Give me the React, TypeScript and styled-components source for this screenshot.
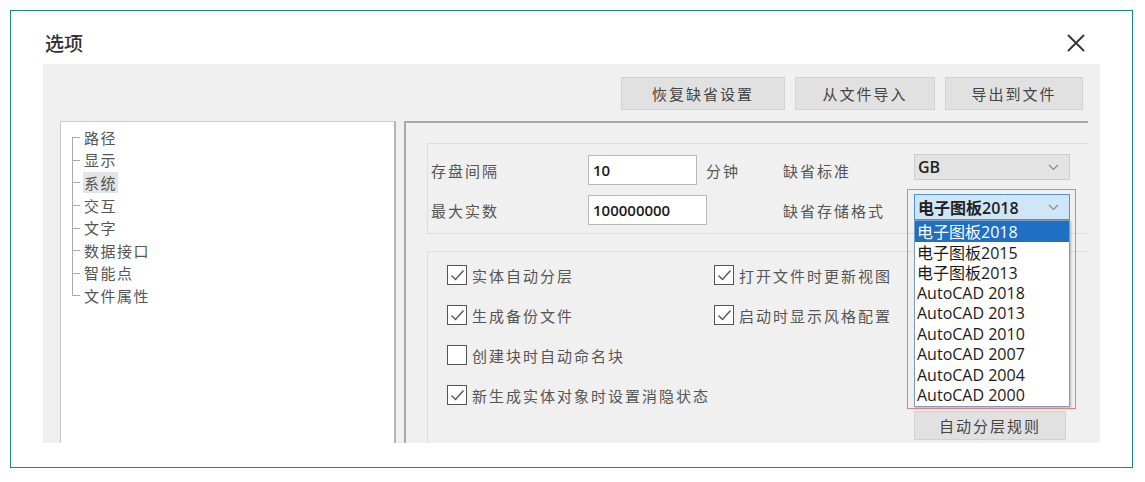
import styled, { createGlobalStyle } from 'styled-components';

const GlobalStyle = createGlobalStyle`
	body {
		margin: 0;
		background: #fff;
		font-family: 'Noto Sans CJK SC', 'Noto Sans', sans-serif;
	}
`;

const cjk = `'Noto Sans CJK SC', sans-serif`;
const latin = `'Open Sans', 'Noto Sans CJK SC', sans-serif`;

const Frame = styled.div`
	margin: 10px 0 0 10px;
	width: 1123px;
	height: 458px;
	box-sizing: border-box;
	border: 1px solid #1b8a82;
	overflow: hidden;
`;

const TitleBar = styled.div`
	height: 53px;
	display: flex;
	align-items: center;
	justify-content: space-between;
	padding: 10px 46px 0 34px;
	box-sizing: border-box;
`;

const Title = styled.h1`
	margin: 0;
	font-family: ${cjk};
	font-size: 19px;
	font-weight: 500;
	color: #333;
`;

const CloseButton = styled.button`
	border: none;
	background: none;
	padding: 0;
	width: 20px;
	height: 20px;
	display: flex;
	cursor: pointer;
`;

const Body = styled.div`
	margin-left: 32px;
	width: 1057px;
	height: 379px;
	background: #f0f0f0;
	overflow: hidden;
	padding-top: 13px;
	box-sizing: border-box;
`;

const Toolbar = styled.div`
	display: flex;
	justify-content: flex-end;
	gap: 10px;
	padding-right: 17px;
`;

const Button = styled.button<{ $w: number }>`
	width: ${(p) => p.$w}px;
	height: 33px;
	background: #e1e1e1;
	border: 1px solid #d2d2d2;
	font-family: ${cjk};
	font-size: 15px;
	letter-spacing: 2px;
	color: #444;
	padding: 0;
`;

const Main = styled.div`
	display: flex;
	gap: 8px;
	margin-top: 11px;
	padding-left: 17px;
`;

const TreePanel = styled.ul`
	list-style: none;
	margin: 0;
	width: 336px;
	height: 360px;
	box-sizing: border-box;
	background: #fff;
	border: 1px solid #c9c9c9;
	border-right: 2px solid #b5b5b5;
	padding: 4px 0 0 11px;
`;

const TreeItem = styled.li<{ $first?: boolean; $last?: boolean; $selected?: boolean }>`
	position: relative;
	height: 22.6px;
	display: flex;
	align-items: center;
	padding-left: 11px;
	font-family: ${cjk};
	font-size: 15px;
	letter-spacing: 1.5px;
	color: #555;
	&::before {
		content: '';
		position: absolute;
		left: 0;
		top: 50%;
		width: 8px;
		border-top: 1px solid #a8a8a8;
	}
	&::after {
		content: '';
		position: absolute;
		left: 0;
		top: ${(p) => (p.$first ? '50%' : '0')};
		bottom: ${(p) => (p.$last ? '50%' : '0')};
		border-left: 1px solid #a8a8a8;
	}
	span {
		padding: 0 1px;
		background: ${(p) => (p.$selected ? '#e4e4e4' : 'transparent')};
	}
`;

const SettingsPanel = styled.div`
	width: 684px;
	height: 360px;
	box-sizing: border-box;
	border-top: 2px solid #a9a9a9;
	border-left: 2px solid #a9a9a9;
	padding: 20px 0 0 21px;
	display: flex;
	flex-direction: column;
	gap: 17px;
`;

const GroupBox = styled.div`
	border: 1px solid #dedede;
	border-right: none;
	box-sizing: border-box;
`;

const FieldGrid = styled.div`
	display: grid;
	grid-template-columns: 157px 195px 131px 156px;
	grid-auto-rows: 34px;
	row-gap: 6px;
	align-items: center;
	padding: 9px 0 6px 3px;
`;

const Label = styled.span`
	font-family: ${cjk};
	font-size: 15px;
	letter-spacing: 2px;
	color: #555;
`;

const InputCell = styled.div`
	display: flex;
	align-items: center;
	gap: 9px;
`;

const TextInput = styled.div<{ $w: number }>`
	width: ${(p) => p.$w}px;
	height: 30px;
	box-sizing: border-box;
	background: #fff;
	border: 1px solid #b9b9b9;
	display: flex;
	align-items: center;
	padding-left: 4px;
	font-family: ${latin};
	font-size: 15px;
	font-weight: 600;
	color: #1a1a1a;
`;

const SelectWrap = styled.div`
	position: relative;
	margin-bottom: 6px;
`;

const Select = styled.div<{ $focused?: boolean }>`
	height: 26px;
	box-sizing: border-box;
	display: flex;
	align-items: center;
	justify-content: space-between;
	padding: 0 10px 0 3px;
	background: ${(p) => (p.$focused ? '#cfe6f8' : '#e3e3e3')};
	border: 1px solid ${(p) => (p.$focused ? '#4f93d3' : '#cdcdcd')};
	font-family: ${latin};
	font-size: 16px;
	font-weight: 600;
	color: #222;
`;

const Highlight = styled.div`
	position: absolute;
	left: -7px;
	top: -5px;
	width: 169px;
	height: 220px;
	box-sizing: border-box;
	border: 1.5px solid #e88080;
	pointer-events: none;
	z-index: 3;
`;

const DropList = styled.ul`
	position: absolute;
	left: 0;
	top: 100%;
	width: 156px;
	margin: 0;
	padding: 0;
	list-style: none;
	box-sizing: border-box;
	background: #fff;
	border: 1px solid #7f9cbf;
	box-shadow: 1px 1px 2px rgba(0, 0, 0, 0.25);
	z-index: 2;
`;

const DropItem = styled.li<{ $active?: boolean }>`
	height: 20.5px;
	display: flex;
	align-items: center;
	padding-left: 2px;
	font-family: ${latin};
	font-size: 16px;
	color: ${(p) => (p.$active ? '#fff' : '#1a1a1a')};
	background: ${(p) => (p.$active ? '#1f6fc5' : 'transparent')};
`;

const CheckGrid = styled.div`
	display: grid;
	grid-template-columns: 267px 200px 154px;
	grid-auto-rows: 40px;
	align-items: center;
	padding: 3px 0 0 19px;
	height: 200px;
`;

const CheckRow = styled.label<{ $col?: number }>`
	display: flex;
	align-items: center;
	gap: 5px;
	grid-column: ${(p) => p.$col ?? 1};
	font-family: ${cjk};
	font-size: 15px;
	letter-spacing: 2px;
	color: #555;
	white-space: nowrap;
`;

const Box = styled.span`
	width: 20px;
	height: 20px;
	box-sizing: border-box;
	border: 1.5px solid #555;
	background: #fff;
	display: flex;
	align-items: center;
	justify-content: center;
`;

const RuleButton = styled(Button)`
	grid-column: 3;
	grid-row: 5;
	align-self: start;
	margin-top: -4px;
	height: 29px;
`;

function Chevron() {
	return (
		<svg width="11" height="7" viewBox="0 0 11 7">
			<polyline points="1,1 5.5,5.5 10,1" fill="none" stroke="#8a8a8a" strokeWidth="1.2" />
		</svg>
	);
}

function Check({ on }: { on?: boolean }) {
	return (
		<Box>
			{on && (
				<svg width="15" height="13" viewBox="0 0 15 13">
					<polyline points="1.5,6.5 5.5,10.5 13.5,1.5" fill="none" stroke="#555" strokeWidth="1.4" />
				</svg>
			)}
		</Box>
	);
}

const treeItems = ['路径', '显示', '系统', '交互', '文字', '数据接口', '智能点', '文件属性'];
const formats = [
	'电子图板2018',
	'电子图板2015',
	'电子图板2013',
	'AutoCAD 2018',
	'AutoCAD 2013',
	'AutoCAD 2010',
	'AutoCAD 2007',
	'AutoCAD 2004',
	'AutoCAD 2000',
];

export default function App() {
	return (
		<>
			<GlobalStyle />
			<Frame>
				<TitleBar>
					<Title>选项</Title>
					<CloseButton aria-label="close">
						<svg width="20" height="20" viewBox="0 0 20 20">
							<path d="M2 2 L18 18 M18 2 L2 18" stroke="#333" strokeWidth="1.8" />
						</svg>
					</CloseButton>
				</TitleBar>
				<Body>
					<Toolbar>
						<Button $w={164}>恢复缺省设置</Button>
						<Button $w={140}>从文件导入</Button>
						<Button $w={138}>导出到文件</Button>
					</Toolbar>
					<Main>
						<TreePanel>
							{treeItems.map((t, i) => (
								<TreeItem
									key={t}
									$first={i === 0}
									$last={i === treeItems.length - 1}
									$selected={t === '系统'}
								>
									<span>{t}</span>
								</TreeItem>
							))}
						</TreePanel>
						<SettingsPanel>
							<GroupBox>
								<FieldGrid>
									<Label>存盘间隔</Label>
									<InputCell>
										<TextInput $w={109}>10</TextInput>
										<Label>分钟</Label>
									</InputCell>
									<Label>缺省标准</Label>
									<SelectWrap>
										<Select>
											GB
											<Chevron />
										</Select>
									</SelectWrap>
									<Label>最大实数</Label>
									<InputCell>
										<TextInput $w={119}>100000000</TextInput>
									</InputCell>
									<Label>缺省存储格式</Label>
									<SelectWrap>
										<Select $focused>
											电子图板2018
											<Chevron />
										</Select>
										<DropList>
											{formats.map((f, i) => (
												<DropItem key={f} $active={i === 0}>
													{f}
												</DropItem>
											))}
										</DropList>
										<Highlight />
									</SelectWrap>
								</FieldGrid>
							</GroupBox>
							<GroupBox>
								<CheckGrid>
									<CheckRow>
										<Check on />
										实体自动分层
									</CheckRow>
									<CheckRow $col={2}>
										<Check on />
										打开文件时更新视图
									</CheckRow>
									<CheckRow>
										<Check on />
										生成备份文件
									</CheckRow>
									<CheckRow $col={2}>
										<Check on />
										启动时显示风格配置
									</CheckRow>
									<CheckRow>
										<Check />
										创建块时自动命名块
									</CheckRow>
									<CheckRow>
										<Check on />
										新生成实体对象时设置消隐状态
									</CheckRow>
									<RuleButton $w={152}>自动分层规则</RuleButton>
								</CheckGrid>
							</GroupBox>
						</SettingsPanel>
					</Main>
				</Body>
			</Frame>
		</>
	);
}
